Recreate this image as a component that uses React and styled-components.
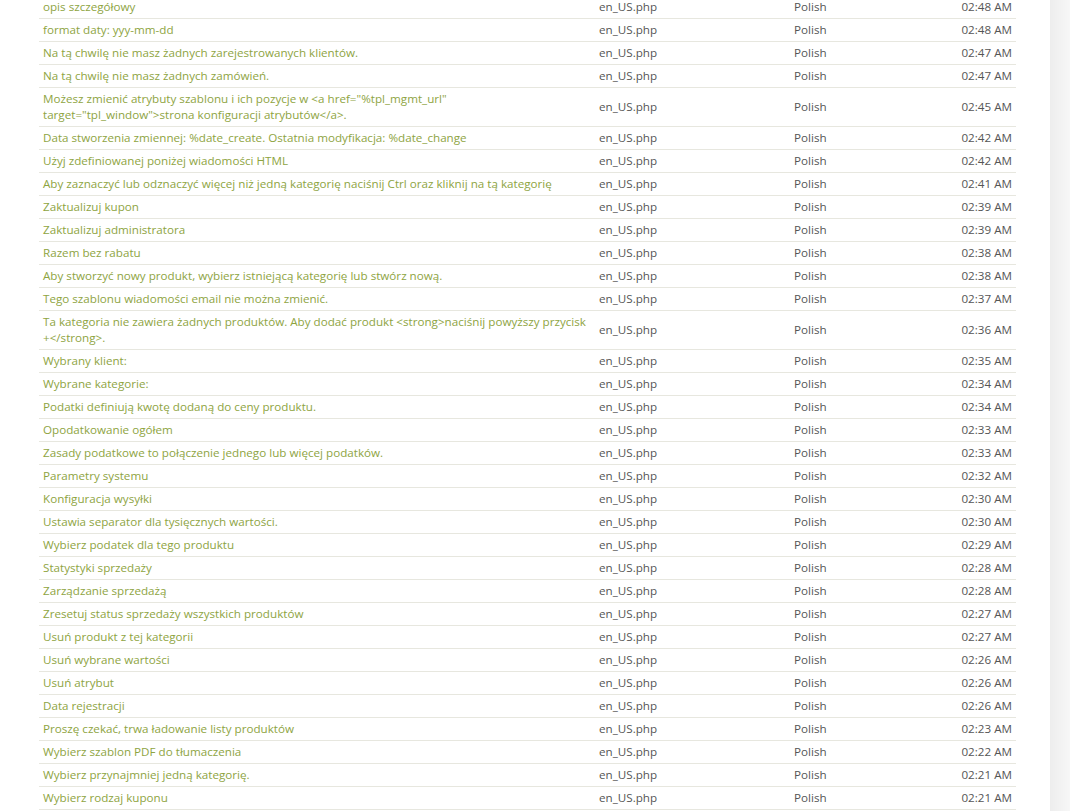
import React from "react";
import styled, { createGlobalStyle } from "styled-components";

const Global = createGlobalStyle`
  html, body { margin: 0; padding: 0; background: #ffffff; overflow: hidden; }
  body { font-family: "Open Sans", "Liberation Sans", sans-serif; font-size: 11.65px; }
`;

const Page = styled.div`
  display: flex;
  height: 811px;
  overflow: hidden;
`;

const Main = styled.main`
  flex: 1;
  background: #fff;
  padding-left: 39px;
`;

const Gutter = styled.div`
  width: 20px;
  background: linear-gradient(to right, #ededed, #f7f7f7);
`;

const Table = styled.table`
  width: 977px;
  border-collapse: collapse;
  margin-top: -4px;
  table-layout: fixed;
`;

const Row = styled.tr`
  border-bottom: 1px solid #e7e7df;
`;

const Cell = styled.td`
  box-sizing: border-box;
  padding: 3px 4px;
  line-height: 16px;
  vertical-align: middle;
  color: ${(p) => (p.$phrase ? "#8ea43f" : "#555555")};
  text-align: ${(p) => (p.$right ? "right" : "left")};
  width: ${(p) => p.$w || "auto"};
`;

const rows = [
  ["opis szczegółowy", "02:48 AM"],
  ["format daty: yyy-mm-dd", "02:48 AM"],
  ["Na tą chwilę nie masz żadnych zarejestrowanych klientów.", "02:47 AM"],
  ["Na tą chwilę nie masz żadnych zamówień.", "02:47 AM"],
  [
    'Możesz zmienić atrybuty szablonu i ich pozycje w <a href="%tpl_mgmt_url" target="tpl_window">strona konfiguracji atrybutów</a>.',
    "02:45 AM",
  ],
  ["Data stworzenia zmiennej: %date_create. Ostatnia modyfikacja: %date_change", "02:42 AM"],
  ["Użyj zdefiniowanej poniżej wiadomości HTML", "02:42 AM"],
  ["Aby zaznaczyć lub odznaczyć więcej niż jedną kategorię naciśnij Ctrl oraz kliknij na tą kategorię", "02:41 AM"],
  ["Zaktualizuj kupon", "02:39 AM"],
  ["Zaktualizuj administratora", "02:39 AM"],
  ["Razem bez rabatu", "02:38 AM"],
  ["Aby stworzyć nowy produkt, wybierz istniejącą kategorię lub stwórz nową.", "02:38 AM"],
  ["Tego szablonu wiadomości email nie można zmienić.", "02:37 AM"],
  [
    "Ta kategoria nie zawiera żadnych produktów. Aby dodać produkt <strong>naciśnij powyższy przycisk +</strong>.",
    "02:36 AM",
  ],
  ["Wybrany klient:", "02:35 AM"],
  ["Wybrane kategorie:", "02:34 AM"],
  ["Podatki definiują kwotę dodaną do ceny produktu.", "02:34 AM"],
  ["Opodatkowanie ogółem", "02:33 AM"],
  ["Zasady podatkowe to połączenie jednego lub więcej podatków.", "02:33 AM"],
  ["Parametry systemu", "02:32 AM"],
  ["Konfiguracja wysyłki", "02:30 AM"],
  ["Ustawia separator dla tysięcznych wartości.", "02:30 AM"],
  ["Wybierz podatek dla tego produktu", "02:29 AM"],
  ["Statystyki sprzedaży", "02:28 AM"],
  ["Zarządzanie sprzedażą", "02:28 AM"],
  ["Zresetuj status sprzedaży wszystkich produktów", "02:27 AM"],
  ["Usuń produkt z tej kategorii", "02:27 AM"],
  ["Usuń wybrane wartości", "02:26 AM"],
  ["Usuń atrybut", "02:26 AM"],
  ["Data rejestracji", "02:26 AM"],
  ["Proszę czekać, trwa ładowanie listy produktów", "02:23 AM"],
  ["Wybierz szablon PDF do tłumaczenia", "02:22 AM"],
  ["Wybierz przynajmniej jedną kategorię.", "02:21 AM"],
  ["Wybierz rodzaj kuponu", "02:21 AM"],
];

export default function App() {
  return (
    <>
      <Global />
      <Page>
        <Main>
          <Table>
            <tbody>
              {rows.map(([phrase, time], i) => (
                <Row key={i}>
                  <Cell $phrase $w="556px">{phrase}</Cell>
                  <Cell $w="195px">en_US.php</Cell>
                  <Cell $w="120px">Polish</Cell>
                  <Cell $right>{time}</Cell>
                </Row>
              ))}
            </tbody>
          </Table>
        </Main>
        <Gutter />
      </Page>
    </>
  );
}
